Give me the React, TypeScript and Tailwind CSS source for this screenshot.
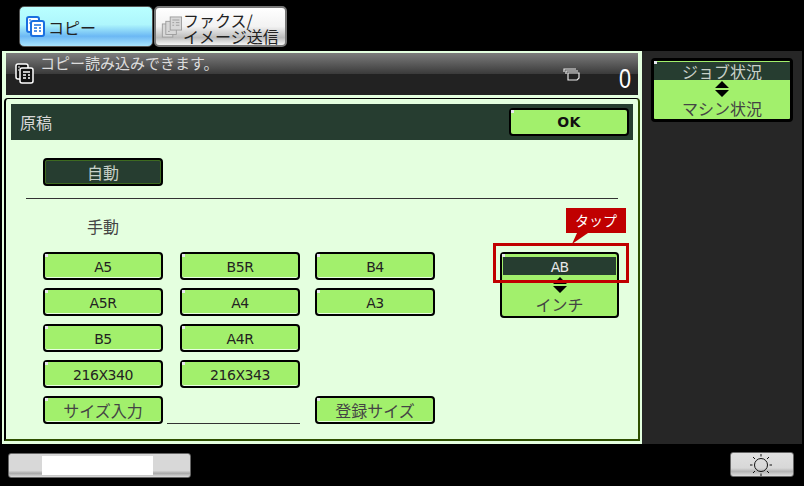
import type { ReactNode } from 'react';

const FONT = "font-['Noto_Sans_CJK_JP','Noto_Sans_CJK_SC',sans-serif]";

function Dot() {
  return <span className="absolute left-0 top-0 size-[3px] bg-[#e8e8f0]" />;
}

/** 120x28 の緑ボタン */
function Key({ label, mono }: { label: string; mono?: boolean }) {
  return (
    <div
      className={`relative flex h-[28px] w-[120px] items-center justify-center rounded-[4px] border-2 border-black bg-[#a2f06c] shadow-[inset_0_-1px_0_#e6ffe0] ${
        mono ? "pt-[2px] font-['DejaVu_Sans',sans-serif] text-[14px] tracking-[-0.4px] text-[#222]" : 'text-[16px] text-[#444]'
      }`}
    >
      <Dot />
      {label}
    </div>
  );
}

function UpDown({ className }: { className?: string }) {
  return (
    <svg width="16" height="16" viewBox="0 0 16 16" className={className}>
      <path d="M8 0 L15 7 L1 7 Z M1 9 L15 9 L8 16 Z" fill="#000" />
    </svg>
  );
}

function CopyIcon({ fill, stroke, line, width = 1.5 }: { fill: string; stroke: string; line: string; width?: number }) {
  return (
    <svg width="19" height="21" viewBox="0 0 19 21">
      <rect x="1" y="1" width="12" height="15" rx="2" fill={fill} stroke={stroke} strokeWidth={width} />
      <rect x="5" y="5" width="13" height="15" rx="2" fill={fill} stroke={stroke} strokeWidth={width} />
      <path d="M8 9 H15 M8 12 H11 M13 12 H15 M8 15 H11 M13 15 H15" stroke={line} strokeWidth="1.5" fill="none" />
      <path d="M3 4 H5 M3 7 H4" stroke={line} strokeWidth="1" />
    </svg>
  );
}

function FaxIcon() {
  return (
    <svg width="21" height="22" viewBox="0 0 24 24" fill="#d8d8d8" stroke="#999" strokeWidth="1">
      <rect x="1.5" y="8.5" width="12" height="15" />
      <rect x="5.5" y="5.5" width="12" height="15" />
      <rect x="10.5" y="0.5" width="13" height="15" />
      <path d="M13 4 H21 M13 7 H15 M17 7 H21 M13 10 H15 M17 10 H21 M8 17 H10" fill="none" />
    </svg>
  );
}

function StackIcon() {
  return (
    <svg width="17" height="13" viewBox="0 0 17 13" fill="none" stroke="#e8e8e8" strokeWidth="1.2">
      <path d="M1 4 V1 H13 M3 6 V3 H15" />
      <path d="M5 5 H16 V10 L14 12 H5 Z" fill="#222" />
    </svg>
  );
}

function Sun() {
  return (
    <svg width="22" height="22" viewBox="0 0 22 22" fill="none" stroke="#111" strokeWidth="1">
      <circle cx="11" cy="11" r="6.5" />
      <path d="M11 0 V2.5 M11 19.5 V22 M0 11 H2.5 M19.5 11 H22 M3 3 L5 5 M17 17 L19 19 M19 3 L17 5 M5 17 L3 19" />
    </svg>
  );
}

function Row({ children }: { children: ReactNode }) {
  return <div className="flex gap-[17px]">{children}</div>;
}

export default function App() {
  return (
    <div className={`flex h-[486px] w-[804px] flex-col overflow-hidden bg-black ${FONT}`}>
      {/* タブ */}
      <div className="flex h-[51px] shrink-0 gap-px pl-[19px] pt-[6px]">
        <div className="flex h-[41px] w-[134px] items-center gap-[3px] rounded-[5px] border border-[#555] bg-[linear-gradient(#b9ffff_0%,#aef6fc_45%,#6cb8f4_75%,#a8e4ff_100%)] pl-[6px] text-[16px] text-[#222]">
          <CopyIcon fill="#fff" stroke="#1a6fe0" line="#1a6fe0" width={2} />
          コピー
        </div>
        <div className="flex h-[41px] w-[133px] items-center gap-[1px] rounded-[5px] border-2 border-[#777] bg-[linear-gradient(#fff_0%,#f2f2f2_50%,#bdbdbd_80%,#f4f4f4_100%)] pl-[5px] text-[#222]">
          <FaxIcon />
          <div className="pt-[2px] text-[16px] leading-[16px]">
            ファクス/
            <br />
            イメージ送信
          </div>
        </div>
      </div>

      <div className="flex h-[393px] shrink-0 pl-[2px]">
        {/* 左カラム */}
        <div className="flex w-[640px] shrink-0 flex-col bg-[#e4ffdf] pb-[3px] pl-[2px] pr-[2px] pt-[2px]">
          <div className="ml-[2px] mr-[2px] flex h-[42px] shrink-0 bg-[linear-gradient(#7c7c7c_0%,#3a3a3a_50%,#222_51%,#222_100%)] text-[#dcdcdc]">
            <div className="ml-[9px] mt-[10px]">
              <CopyIcon fill="#111" stroke="#fff" line="#fff" />
            </div>
            <div className="ml-[6px] text-[15px] leading-[20px]">コピー読み込みできます。</div>
            <div className="ml-[344px] mt-[15px]">
              <StackIcon />
            </div>
            <div className="ml-auto mr-[7px] mt-[11px] origin-right scale-x-[0.8] font-['Liberation_Sans',sans-serif] text-[27px] font-normal leading-[30px] text-white">
              0
            </div>
          </div>

          <div className="mt-[3px] flex h-[343px] shrink-0 flex-col rounded-tl-[4px] rounded-tr-[4px] border-b-2 border-l-2 border-r-2 border-t border-b-[#2f5000] border-l-black border-r-[#2f5000] border-t-black bg-[#e4ffdf]">
            <div className="mx-[5px] mt-[5px] flex h-[36px] shrink-0 items-center justify-between bg-[#263d30] pl-[9px] pr-[4px] text-[16px] text-[#d8d8d8]">
              原稿
              <div className="relative flex h-[28px] w-[120px] items-center justify-center rounded-[4px] border-2 border-black bg-[#a2f06c] pt-px font-['DejaVu_Sans',sans-serif] text-[14px] font-bold tracking-[0.5px] text-[#111]">
                <Dot />
                OK
              </div>
            </div>

            <div className="ml-[37px] mt-[18px] flex h-[28px] w-[120px] items-center justify-center rounded-[4px] border-2 border-black bg-[#263d30] text-[16px] text-[#c8d0c8] outline outline-1 -outline-offset-3 outline-[#3d6a20]">
              自動
            </div>
            <div className="ml-[20px] mr-[20px] mt-[12px] h-px bg-[#333]" />

            <div className="relative flex grow flex-col">
              <div className="ml-[81px] mt-[17px] h-[36px] text-[16px] leading-[20px] text-[#444]">手動</div>

              <div className="ml-[37px] flex">
                <div className="flex w-[392px] flex-col gap-[8px]">
                  <Row>
                    <Key label="A5" mono />
                    <Key label="B5R" mono />
                    <div className="-ml-[2px]"><Key label="B4" mono /></div>
                  </Row>
                  <Row>
                    <Key label="A5R" mono />
                    <Key label="A4" mono />
                    <div className="-ml-[2px]"><Key label="A3" mono /></div>
                  </Row>
                  <Row>
                    <Key label="B5" mono />
                    <Key label="A4R" mono />
                  </Row>
                  <Row>
                    <Key label="216X340" mono />
                    <Key label="216X343" mono />
                  </Row>
                  <div className="flex">
                    <Key label="サイズ入力" />
                    <div className="ml-[4px] h-[28px] w-[133px] border-b border-[#333]" />
                    <div className="ml-[15px]"><Key label="登録サイズ" /></div>
                  </div>
                </div>

                {/* AB/インチ 切替 */}
                <div className="relative ml-[65px] flex h-[66px] w-[119px] flex-col items-center rounded-[4px] border-2 border-black bg-[#a2f06c] pt-[3px] text-[#444]">
                  <Dot />
                  <div className="flex h-[18px] w-[113px] items-center justify-center bg-[#263d30] pt-[2px] font-['DejaVu_Sans',sans-serif] text-[14px] tracking-[-0.8px] text-[#e8e8e8]">
                    AB
                  </div>
                  <UpDown className="mt-[2px]" />
                  <div className="text-[16px] leading-[22px]">インチ</div>
                </div>
              </div>

              {/* タップ注記 */}
              <div className="absolute left-[487px] top-[44px] h-[40px] w-[136px] border-[3px] border-[#c00000]" />
              <div className="absolute left-[560px] top-[9px] flex h-[25px] w-[60px] items-center justify-center bg-[#c00000] text-[14px] text-white">
                タップ
              </div>
              <svg width="20" height="11" viewBox="0 0 20 11" className="absolute left-[564px] top-[34px]">
                <path d="M2 11 L18 0 L7 0 Z" fill="#c00000" />
              </svg>
            </div>
          </div>
        </div>

        {/* 右カラム */}
        <div className="w-[160px] shrink-0 bg-[#262626] pl-[9px] pt-[7px]">
          <div className="relative flex h-[64px] w-[142px] flex-col items-center rounded-[4px] border-[3px] border-black bg-[#a2f06c] text-[16px] text-[#444]">
            <Dot />
            <div className="mt-px flex h-[18px] w-[136px] items-center justify-center bg-[#263d30] text-[#c8d0c8]">ジョブ状況</div>
            <UpDown className="mt-[1px]" />
            <div className="leading-[22px]">マシン状況</div>
          </div>
        </div>
      </div>

      {/* 下部バー */}
      <div className="flex grow items-start justify-between pl-[8px] pr-[10px] pt-[8px]">
        <div className="mt-px flex h-[25px] w-[183px] rounded-[3px] border border-[#666] bg-[linear-gradient(#d8d8d8_0%,#d8d8d8_72%,#aaa_84%,#ddd_100%)] pl-[33px] pt-[2px]">
          <div className="h-[19px] w-[111px] bg-white" />
        </div>
        <div className="flex h-[25px] w-[64px] items-center justify-center rounded-[3px] border border-[#666] bg-[linear-gradient(#e0e0e0_0%,#d8d8d8_65%,#b4b4b4_80%,#ddd_100%)] pr-[2px]">
          <Sun />
        </div>
      </div>
    </div>
  );
}
